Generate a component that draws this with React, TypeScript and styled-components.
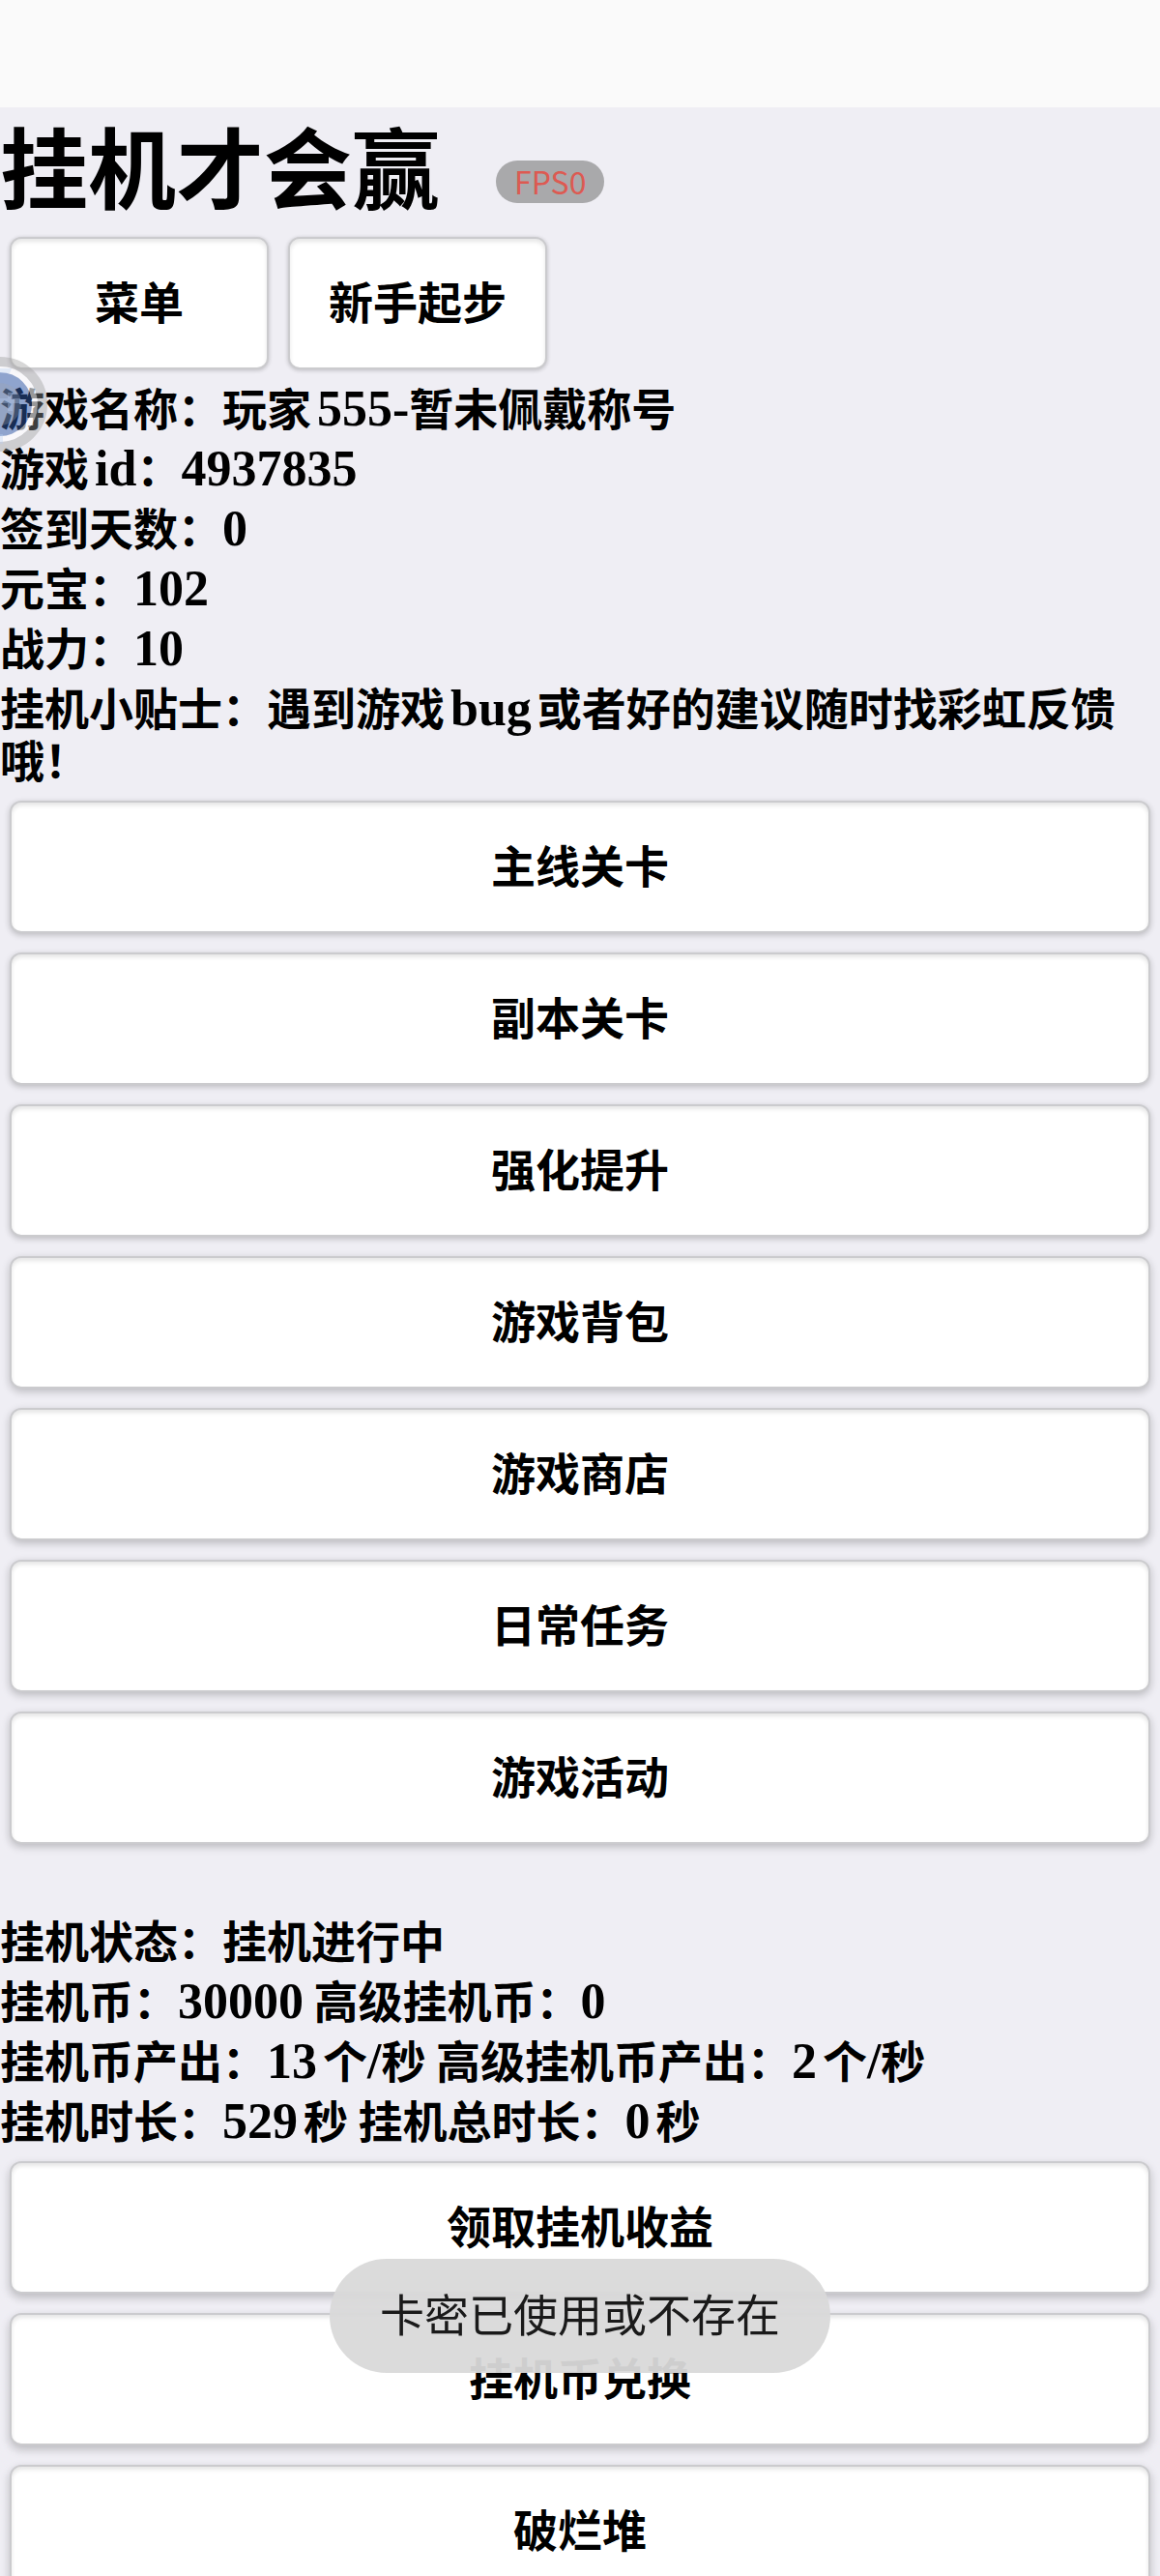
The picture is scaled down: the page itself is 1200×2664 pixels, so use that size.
import React from "react";
import styled, { createGlobalStyle } from "styled-components";

const serifStack = `"Liberation Serif", "Noto Sans CJK SC", serif`;
const sansStack = `"Noto Sans CJK SC", sans-serif`;

const GlobalStyle = createGlobalStyle`
  body {
    margin: 0;
    background: #efeef4;
    color: #000;
    font-family: ${sansStack};
    font-size: 46px;
    font-weight: 700;
    text-autospace: no-autospace;
  }
`;

const Screen = styled.div`
  height: 100vh;
  overflow-y: auto;
  scrollbar-width: none;
  background: #efeef4;
`;

const StatusBar = styled.div`
  height: 111px;
  background: #fafafa;
`;

const Header = styled.header`
  display: flex;
  align-items: center;
  gap: 58px;
`;

const Title = styled.h1`
  margin: 0;
  padding-bottom: 8px;
  font-size: 91px;
  line-height: 116px;
  font-weight: 700;
`;

const FpsBadge = styled.span`
  margin-top: 30px;
  padding: 0 19px 2px;
  border-radius: 22px;
  background: #a9a9ab;
  color: #dd5a52;
  font-size: 32px;
  line-height: 42px;
  font-weight: 400;
`;

const ButtonRow = styled.div`
  display: flex;
  gap: 20px;
  padding: 10px;
`;

const ButtonList = styled.nav`
  display: flex;
  flex-direction: column;
  gap: 20px;
  padding: 10px;
`;

const GameButton = styled.button<{ $depth: number }>`
  box-sizing: border-box;
  min-width: 268px;
  height: 137px;
  padding: 0 40px 8px;
  border: 2px solid #cbcbce;
  border-radius: 12px;
  background: #fff;
  box-shadow:
    inset 0 3px 4px rgba(0, 0, 0, 0.1),
    0 ${(p) => p.$depth}px ${(p) => p.$depth * 2 + 2}px rgba(0, 0, 0, 0.22);
  color: #000;
  font: inherit;
  line-height: 54px;
`;

const Stats = styled.section<{ $spaced?: boolean }>`
  margin-top: ${(p) => (p.$spaced ? "60px" : "0")};
`;

const StatLine = styled.p`
  margin: 0;
  padding: 1px 0 7px;
  line-height: 54px;
`;

const Latin = styled.span<{ $before: boolean; $after: boolean }>`
  margin-left: ${(p) => (p.$before ? "6px" : "0")};
  margin-right: ${(p) => (p.$after ? "6px" : "0")};
  font-family: ${serifStack};
  font-size: 52px;
  line-height: 44px;
`;

const Toast = styled.div`
  position: fixed;
  bottom: 210px;
  left: 50%;
  transform: translateX(-50%);
  padding: 28px 52px 36px;
  border-radius: 59px;
  background: rgba(217, 217, 217, 0.95);
  color: #1a1a1a;
  font-weight: 400;
  line-height: 54px;
  white-space: nowrap;
`;

const FloatingBall = styled.svg`
  position: fixed;
  top: 369px;
  left: 0;
  width: 50px;
  height: 98px;
`;

const isIdeograph = (c: string | undefined) => !!c && /[\u4e00-\u9fff]/.test(c);
const isAlnum = (c: string) => /[A-Za-z0-9]/.test(c);

/* Sets runs of Latin text in the serif face, with letters and digits spaced from ideographs beside them. */
function Mixed({ text }: { text: string }) {
  const parts = text.split(/([A-Za-z0-9/-]+)/);
  return (
    <>
      {parts.map((part, i) =>
        i % 2 ? (
          <Latin
            key={i}
            $before={isAlnum(part[0]) && isIdeograph(parts[i - 1].slice(-1))}
            $after={isAlnum(part.slice(-1)) && isIdeograph(parts[i + 1][0])}
          >
            {part}
          </Latin>
        ) : (
          part
        )
      )}
    </>
  );
}

const profile = [
  "游戏名称：玩家555-暂未佩戴称号",
  "游戏id：4937835",
  "签到天数：0",
  "元宝：102",
  "战力：10",
  "挂机小贴士：遇到游戏bug或者好的建议随时找彩虹反馈哦！",
];

const mainMenu = ["主线关卡", "副本关卡", "强化提升", "游戏背包", "游戏商店", "日常任务", "游戏活动"];

const idleStatus = [
  "挂机状态：挂机进行中",
  "挂机币：30000 高级挂机币：0",
  "挂机币产出：13个/秒 高级挂机币产出：2个/秒",
  "挂机时长：529秒 挂机总时长：0秒",
];

const idleMenu = ["领取挂机收益", "挂机币兑换", "破烂堆"];

export default function App() {
  return (
    <>
      <GlobalStyle />
      <Screen>
        <StatusBar />
        <main>
          <Header>
            <Title>挂机才会赢</Title>
            <FpsBadge>FPS0</FpsBadge>
          </Header>
          <ButtonRow>
            <GameButton $depth={1}>菜单</GameButton>
            <GameButton $depth={1}>新手起步</GameButton>
          </ButtonRow>
          <Stats>
            {profile.map((line) => (
              <StatLine key={line}>
                <Mixed text={line} />
              </StatLine>
            ))}
          </Stats>
          <ButtonList>
            {mainMenu.map((label, i) => (
              <GameButton key={label} $depth={i < 3 ? 2 : 3}>
                {label}
              </GameButton>
            ))}
          </ButtonList>
          <Stats $spaced>
            {idleStatus.map((line) => (
              <StatLine key={line}>
                <Mixed text={line} />
              </StatLine>
            ))}
          </Stats>
          <ButtonList>
            {idleMenu.map((label) => (
              <GameButton key={label} $depth={4}>
                {label}
              </GameButton>
            ))}
          </ButtonList>
        </main>
      </Screen>
      <FloatingBall viewBox="0 0 50 98" aria-hidden="true">
        <circle cx="0" cy="49" r="44" fill="none" stroke="#9a9a9a" strokeOpacity="0.4" strokeWidth="10" />
        <circle cx="0" cy="49" r="36" fill="none" stroke="#fff" strokeOpacity="0.6" strokeWidth="6" />
        <circle cx="0" cy="49" r="33" fill="#2f5aa8" fillOpacity="0.5" />
        <circle cx="0" cy="49" r="22" fill="#a0a4ae" fillOpacity="0.3" />
        <path d="M0 12h12l-2 5H0zM0 43h8v-6h5v6h8v5h-8v8H8v-8H0zM0 80h3v10H0z" fill="#b7cdf0" fillOpacity="0.35" />
      </FloatingBall>
      <Toast role="status">卡密已使用或不存在</Toast>
    </>
  );
}
